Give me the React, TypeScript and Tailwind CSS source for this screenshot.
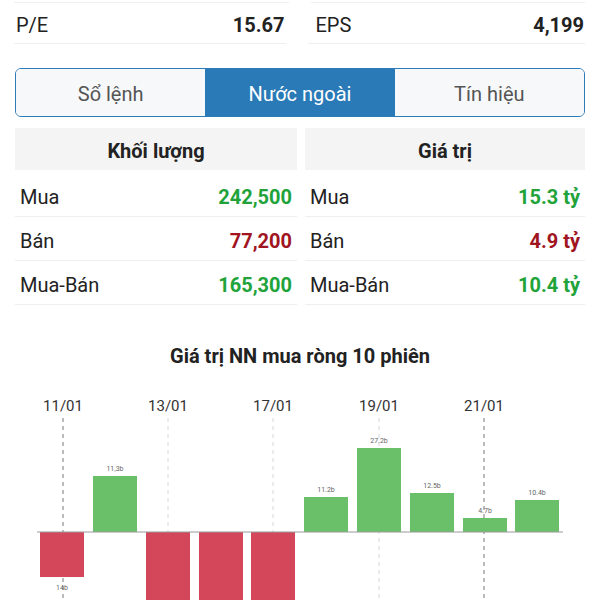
import { useState } from 'react'

const font = { fontFamily: 'Roboto, "Noto Sans", sans-serif' }

const tabs = ['Sổ lệnh', 'Nước ngoài', 'Tín hiệu']

const volRows = [
  { label: 'Mua', value: '242,500', up: true },
  { label: 'Bán', value: '77,200', up: false },
  { label: 'Mua-Bán', value: '165,300', up: true },
]
const valRows = [
  { label: 'Mua', value: '15.3 tỷ', up: true },
  { label: 'Bán', value: '4.9 tỷ', up: false },
  { label: 'Mua-Bán', value: '10.4 tỷ', up: true },
]

// y values are relative to chart top (page y 380)
const BASE = 152
const bars = [
  { x: 40, v: -45, label: '14b' },
  { x: 93, v: 56, label: '11,3b' },
  { x: 146, v: -120, label: '' },
  { x: 199, v: -120, label: '' },
  { x: 251, v: -120, label: '' },
  { x: 304, v: 35, label: '11.2b' },
  { x: 357, v: 84, label: '27.2b' },
  { x: 410, v: 39, label: '12.5b' },
  { x: 463, v: 14, label: '4.7b' },
  { x: 515, v: 32, label: '10.4b' },
]
const dates = [
  { x: 63, t: '11/01', dark: true },
  { x: 168, t: '13/01', dark: false },
  { x: 273, t: '17/01', dark: false },
  { x: 379, t: '19/01', dark: false },
  { x: 484, t: '21/01', dark: true },
]

function Cell({ label, value, cls }: { label: string; value: string; cls: string }) {
  return (
    <div className="flex items-center justify-between h-[44px] pt-[4px] border-b border-[#efefef] px-[5px] text-[20px]">
      <span className="text-[#222]">{label}</span>
      <span className={`font-bold ${cls}`}>{value}</span>
    </div>
  )
}

function Chart() {
  return (
    <svg width={600} height={220} className="block">
      {dates.map(d => (
        <g key={d.t}>
          <text x={d.x} y={31} textAnchor="middle" fontSize={15} fill="#333" style={font}>{d.t}</text>
          <line x1={d.x} y1={38} x2={d.x} y2={220} stroke={d.dark ? '#777' : '#d8d8d8'} strokeWidth={1} strokeDasharray="4 4" />
        </g>
      ))}
      {bars.map((b, i) => {
        const up = b.v > 0
        const y = up ? BASE - b.v : BASE
        const h = Math.abs(b.v)
        return (
          <g key={i}>
            <rect x={b.x} y={y} width={44} height={h} fill={up ? '#6abf69' : '#d4475a'} />
            {b.label && (
              <text x={b.x + 22} y={up ? y - 5 : BASE + h + 13} textAnchor="middle" fontSize={7} fill="#666" style={font}>{b.label}</text>
            )}
          </g>
        )
      })}
      <line x1={37} y1={BASE} x2={563} y2={BASE} stroke="#9a9a9a" strokeWidth={1} />
    </svg>
  )
}

export default function App() {
  const [tab, setTab] = useState(1)

  return (
    <div className="w-[600px] h-[600px] overflow-hidden bg-white" style={font}>
      <div className="flex gap-[22px] px-[14px] pr-[15px]">
        <div className="flex-1 h-[3px] border-b border-[#efefef]" />
        <div className="flex-1 h-[3px] border-b border-[#efefef]" />
      </div>
      <div className="flex gap-[22px] px-[14px] pr-[15px] text-[20px] text-[#222]">
        <div className="flex-1 flex items-center justify-between h-[41px] pt-[4px] border-b border-[#efefef] pl-[2px] pr-[1px]">
          <span>P/E</span>
          <span className="font-bold">15.67</span>
        </div>
        <div className="flex-1 flex items-center justify-between h-[41px] pt-[4px] border-b border-[#efefef] pl-[8px] pr-[1px]">
          <span>EPS</span>
          <span className="font-bold">4,199</span>
        </div>
      </div>

      <div className="mx-[15px] mt-[24px] h-[49px] flex rounded-[6px] border-[1.5px] border-[#2b7bb8] overflow-hidden">
        {tabs.map((t, i) => (
          <button
            key={t}
            onClick={() => setTab(i)}
            className={`flex-1 flex items-center justify-center pt-[3px] text-[20px] ${tab === i ? 'bg-[#2a7ab7] text-white' : 'bg-[#f7f8f9] text-[#555]'}`}
          >
            {t}
          </button>
        ))}
      </div>

      <div className="flex gap-[8px] pl-[15px] pr-[15px] mt-[11px]">
        <div className="w-[282px]">
          <div className="h-[42px] pt-[3px] flex items-center justify-center bg-[#f4f4f4] font-bold text-[20px] text-[#222]">Khối lượng</div>
          <div className="mt-[3px]">
            {volRows.map(r => (
              <Cell key={r.label} label={r.label} value={r.value} cls={r.up ? 'text-[#22a33a]' : 'text-[#a0151f]'} />
            ))}
          </div>
        </div>
        <div className="flex-1">
          <div className="h-[42px] pt-[3px] flex items-center justify-center bg-[#f4f4f4] font-bold text-[20px] text-[#222]">Giá trị</div>
          <div className="mt-[3px]">
            {valRows.map(r => (
              <Cell key={r.label} label={r.label} value={r.value} cls={r.up ? 'text-[#22a33a]' : 'text-[#a0151f]'} />
            ))}
          </div>
        </div>
      </div>

      <div className="mt-[38px] h-[26px] flex items-center justify-center font-bold text-[20px] text-[#222]">
        Giá trị NN mua ròng 10 phiên
      </div>
      <div className="mt-[11px]">
        <Chart />
      </div>
    </div>
  )
}
